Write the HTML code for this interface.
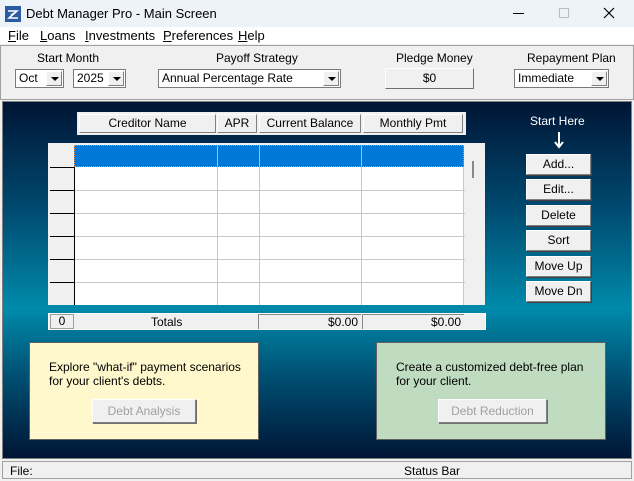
<!DOCTYPE html>
<html><head><style>
*{box-sizing:border-box;margin:0;padding:0}
body{width:634px;height:481px;overflow:hidden;font-family:"Liberation Sans",sans-serif;font-size:12px;color:#000;background:#f0f0f0;position:relative}
.a{position:absolute}
.btn{position:absolute;background:#f0f0f0;border:1px solid;border-color:#fff #808080 #808080 #fff;box-shadow:1px 1px 0 #404040;text-align:center;font-size:12px}
.sel{position:absolute;background:#fff;border:1px solid #7a7a7a;font-size:12px;padding-left:3px;line-height:17px}
.sel .ar{position:absolute;right:1px;top:1px;width:16px;height:15px;background:#f0f0f0;border:1px solid;border-color:#fff #808080 #808080 #fff}
.sel .ar:after{content:"";position:absolute;left:4px;top:5px;border:4px solid transparent;border-top:4px solid #000;border-bottom:0}
.hd{position:absolute;top:114px;height:19px;background:#f0f0f0;border:1px solid;border-color:#fff #808080 #808080 #fff;text-align:center;line-height:17px}
</style></head><body>
<div class="a" style="left:0;top:0;width:634px;height:27px;background:#eef3f9"></div>
<svg class="a" style="left:5px;top:6px" width="16" height="16"><rect width="16" height="16" fill="#2a5d9f"/><path d="M3 5h9L4 12h9M6 9l5-3" stroke="#fff" stroke-width="1.5" fill="none"/></svg>
<div class="a" style="left:26px;top:6px;font-size:13px">Debt Manager Pro - Main Screen</div>
<div class="a" style="left:513px;top:13px;width:11px;height:1px;background:#000"></div>
<div class="a" style="left:559px;top:8px;width:10px;height:10px;border:1px solid #bbb"></div>
<svg class="a" style="left:603px;top:7px" width="12" height="12"><path d="M1 1l10 10M11 1L1 11" stroke="#000" stroke-width="1.2"/></svg>
<div class="a" style="left:0;top:27px;width:634px;height:17px;background:#fff;font-size:13px;line-height:17px">
<span class="a" style="left:8px"><u>F</u>ile</span><span class="a" style="left:40px"><u>L</u>oans</span><span class="a" style="left:85px"><u>I</u>nvestments</span><span class="a" style="left:163px"><u>P</u>references</span><span class="a" style="left:238px"><u>H</u>elp</span></div>
<div class="a" style="left:0;top:45px;width:634px;height:55px;background:#f0f0f0;border:1px solid #a0a0a0"></div>
<div class="a" style="left:37px;top:51px">Start Month</div>
<div class="a" style="left:216px;top:51px">Payoff Strategy</div>
<div class="a" style="left:396px;top:51px">Pledge Money</div>
<div class="a" style="left:527px;top:51px">Repayment Plan</div>
<div class="sel" style="left:15px;top:69px;width:49px;height:19px">Oct<div class="ar"></div></div>
<div class="sel" style="left:73px;top:69px;width:53px;height:19px">2025<div class="ar"></div></div>
<div class="sel" style="left:158px;top:69px;width:183px;height:19px">Annual Percentage Rate<div class="ar"></div></div>
<div class="btn" style="left:385px;top:68px;width:89px;height:21px;line-height:19px;box-shadow:none;border-color:#fff #707070 #707070 #fff">$0</div>
<div class="sel" style="left:514px;top:69px;width:95px;height:19px">Immediate<div class="ar"></div></div>
<div class="a" style="left:2px;top:101px;width:630px;height:358px;background:linear-gradient(#001535 0%,#004a70 30%,#008aaa 58%,#004d70 78%,#001535 100%);border:1px solid #808080"></div>
<div class="a" style="left:77px;top:112px;width:389px;height:23px;background:#f0f0f0"></div>
<div class="hd" style="left:79px;width:137px">Creditor Name</div>
<div class="hd" style="left:217px;width:40px">APR</div>
<div class="hd" style="left:259px;width:102px">Current Balance</div>
<div class="hd" style="left:363px;width:100px">Monthly Pmt</div>
<div class="a" style="left:48px;top:143px;width:437px;height:162px;background:#f0f0f0"></div>
<div class="a" style="left:74px;top:145px;width:390px;height:160px;background:#fff"></div>
<div class="a" style="left:74px;top:145px;width:390px;height:22px;background:#0078d7;border:1px dotted #e89040"></div>
<svg class="a" style="left:50px;top:145px" width="415" height="160">
<g stroke="#c8c8c8"><path d="M24 45.5h391M24 68.5h391M24 91.5h391M24 114.5h391M24 137.5h391"/><path d="M167.5 22v138M209.5 22v138M311.5 22v138M413.5 22v138"/></g>
<g stroke="#a0c0e0"><path d="M167.5 0v22M209.5 0v22M311.5 0v22"/></g>
<g stroke="#000"><path d="M0 22.5h24M0 45.5h24M0 68.5h24M0 91.5h24M0 114.5h24M0 137.5h24M24.5 22v138"/></g>
</svg>
<div class="a" style="left:472px;top:161px;width:2px;height:17px;background:#888"></div>
<div class="a" style="left:48px;top:313px;width:438px;height:17px;background:#f0f0f0;border:1px solid #fff"></div>
<div class="a" style="left:50px;top:314px;width:24px;height:15px;border:1px solid #a0a0a0;text-align:center;line-height:13px">0</div>
<div class="a" style="left:151px;top:315px">Totals</div>
<div class="a" style="left:258px;top:314px;width:103px;height:15px;border-left:1px solid #888;border-top:1px solid #888;text-align:right;padding-right:3px;line-height:14px">$0.00</div>
<div class="a" style="left:362px;top:314px;width:102px;height:15px;border-left:1px solid #888;border-top:1px solid #888;text-align:right;padding-right:3px;line-height:14px">$0.00</div>
<div class="a" style="left:530px;top:114px;color:#fff">Start Here</div>
<svg class="a" style="left:553px;top:131px" width="12" height="18"><path d="M6 1v14M2 11l4 5 4-5" stroke="#fff" stroke-width="2" fill="none"/></svg>
<div class="btn" style="left:526px;top:154px;width:65px;height:21px;line-height:19px">Add...</div>
<div class="btn" style="left:526px;top:179px;width:65px;height:21px;line-height:19px">Edit...</div>
<div class="btn" style="left:526px;top:205px;width:65px;height:21px;line-height:19px">Delete</div>
<div class="btn" style="left:526px;top:230px;width:65px;height:21px;line-height:19px">Sort</div>
<div class="btn" style="left:526px;top:256px;width:65px;height:21px;line-height:19px">Move Up</div>
<div class="btn" style="left:526px;top:281px;width:65px;height:21px;line-height:19px">Move Dn</div>
<div class="a" style="left:29px;top:342px;width:230px;height:98px;background:#fff8cc;border:1px solid #606060"></div>
<div class="a" style="left:49px;top:360px;line-height:14px">Explore "what-if" payment scenarios<br>for your client's debts.</div>
<div class="btn" style="left:92px;top:399px;width:104px;height:24px;line-height:22px;color:#a0a0a0;box-shadow:1px 1px 0 #707070">Debt Analysis</div>
<div class="a" style="left:376px;top:342px;width:230px;height:98px;background:#c0dcc0;border:1px solid #606060"></div>
<div class="a" style="left:396px;top:360px;line-height:14px">Create a customized debt-free plan<br>for your client.</div>
<div class="btn" style="left:438px;top:399px;width:109px;height:24px;line-height:22px;color:#a0a0a0;box-shadow:1px 1px 0 #707070">Debt Reduction</div>
<div class="a" style="left:2px;top:461px;width:630px;height:18px;background:#f0f0f0;border:1px solid #a0a0a0"></div>
<div class="a" style="left:10px;top:464px">File:</div>
<div class="a" style="left:404px;top:464px">Status Bar</div>
</body></html>
